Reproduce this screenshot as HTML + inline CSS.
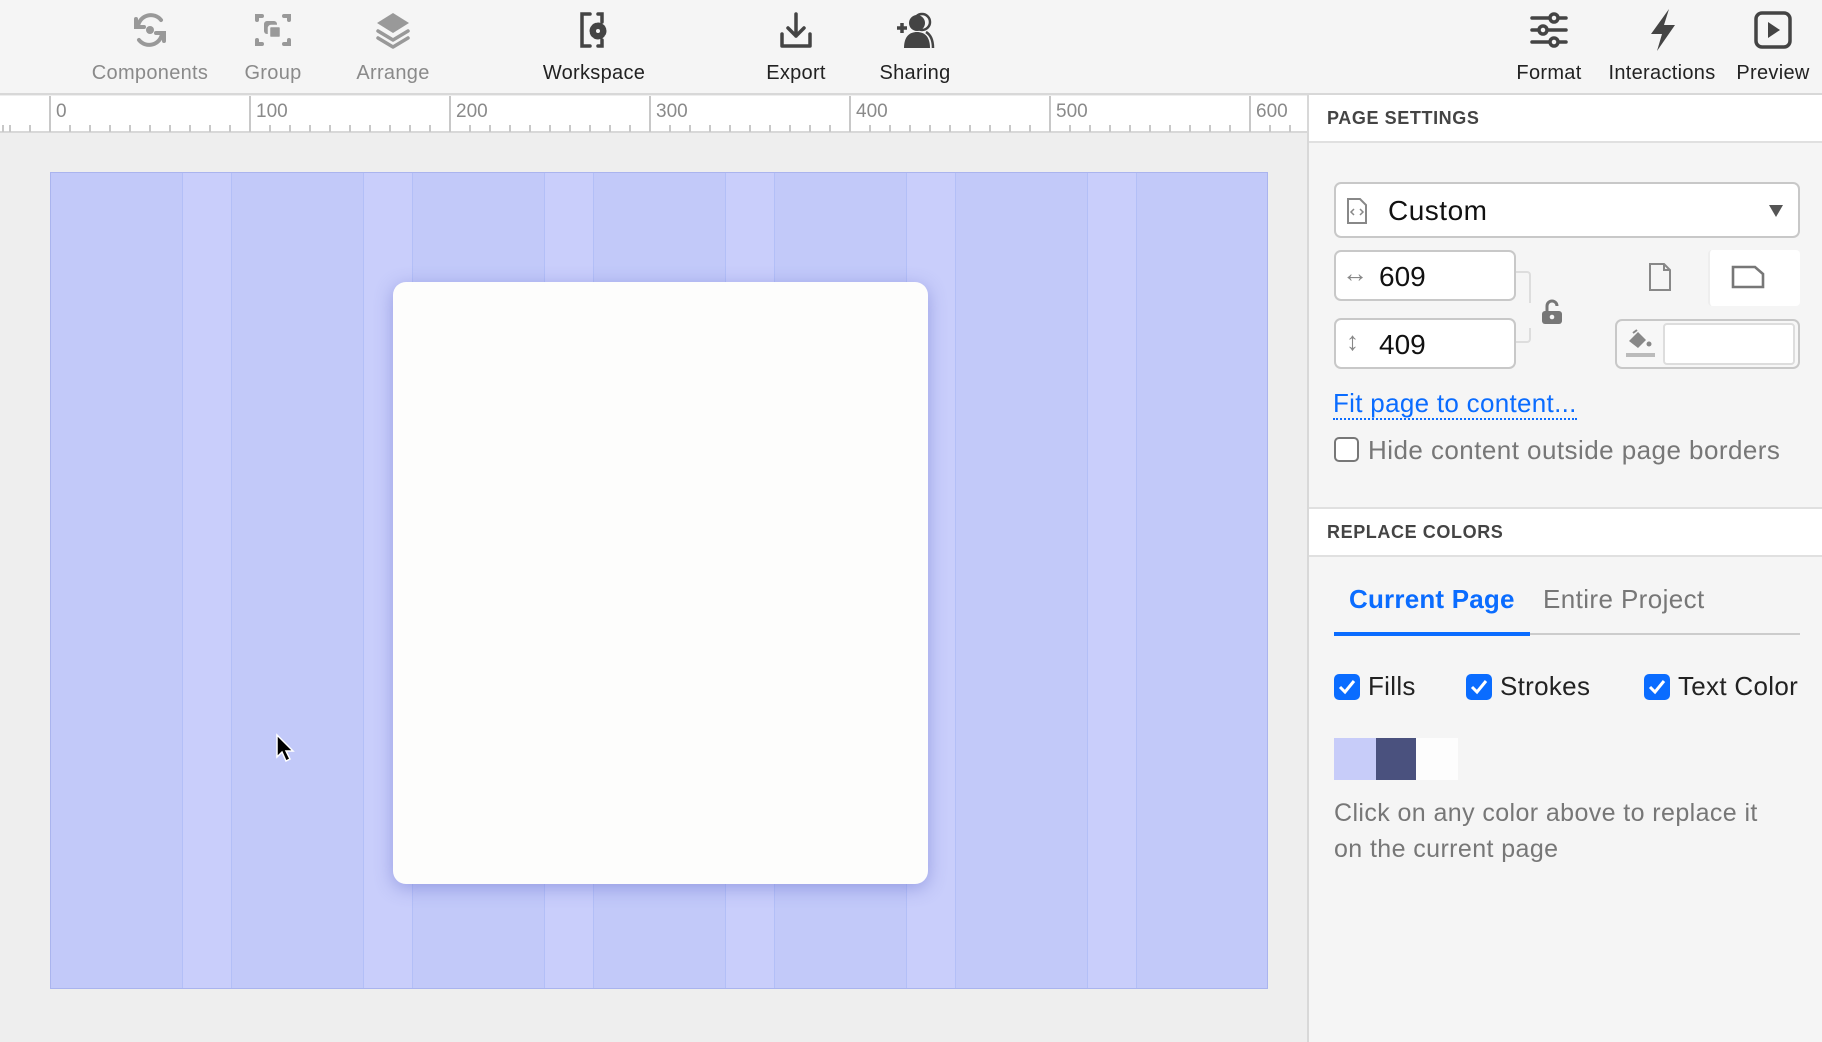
<!DOCTYPE html>
<html><head><meta charset="utf-8">
<style>
*{box-sizing:border-box;margin:0;padding:0}
body{width:1822px;height:1042px;overflow:hidden;background:#eeeeee;font-family:"Liberation Sans",Arial,sans-serif;position:relative}
.abs{position:absolute}
#top{left:0;top:0;width:1822px;height:95px;background:#f5f5f5;border-bottom:2px solid #d8d8d8}
.tb{position:absolute;top:8px;width:140px;margin-left:-70px;text-align:center;font-size:20px;color:#222;letter-spacing:.3px}
.tb svg{display:block;margin:0 auto 10px;width:44px;height:44px}
.tb.g{color:#8a8a8a}
#ruler{left:0;top:96px;width:1307px;height:37px;background:#fff;border-bottom:2px solid #d8d8d8;
background-image:repeating-linear-gradient(90deg,#c8c8c8 0 2px,transparent 2px 200px);background-position:49px 0}
#minor{left:0;top:125px;width:1307px;height:7px;background-image:repeating-linear-gradient(90deg,#c8c8c8 0 2px,transparent 2px 20px);background-position:9px 0}
.rl{position:absolute;top:101px;font-size:19px;color:#8a8a8a}
#grid{left:50px;top:172px;width:1218px;height:817px;border:1px solid #aab4ee;background:#c9cefb;overflow:hidden}
.col{position:absolute;top:0;height:100%;width:133px;background:#c2c9f9;border-left:1px solid #b3bff7;border-right:1px solid #b3bff7}
#page{left:393px;top:282px;width:535px;height:602px;background:#fdfdfc;border-radius:13px;box-shadow:0 4px 18px rgba(90,100,200,.45)}
#panel{left:1307px;top:95px;width:515px;height:947px;background:#f5f5f5;border-left:2px solid #d8d8d8}
.hdr{position:absolute;left:0;width:515px;height:48px;background:#fff;border-bottom:2px solid #e0e0e0;font-size:18px;font-weight:bold;color:#444;padding:13px 0 0 18px;letter-spacing:.6px}
.inp{position:absolute;background:#fff;border:2px solid #c8c8c8;border-radius:7px}
.cb{position:absolute;width:26px;height:26px;border-radius:5px;background:#0a6cff}
.cb svg{position:absolute;left:3px;top:3px}
.lbl{position:absolute;font-size:26px;color:#222;letter-spacing:.3px}
</style></head><body>
<div id="top" class="abs">
 <div class="tb g" style="left:150px"><svg viewBox="0 0 44 44" fill="none" stroke="#999" stroke-width="4" stroke-linecap="round"><path d="M10 18a13 13 0 0 1 23-6"/><path d="M34 26a13 13 0 0 1-23 6"/><path d="M8 11v8h8M36 33v-8h-8"/><circle cx="22" cy="22" r="4" fill="#999" stroke="none"/></svg>Components</div>
 <div class="tb g" style="left:273px"><svg viewBox="0 0 44 44" fill="none" stroke="#999" stroke-width="4" stroke-linecap="round"><path d="M6 12V8h5M33 8h5v4M38 32v4h-5M11 36H6v-4"/><rect x="13" y="13" width="13" height="13" rx="3" fill="#999" stroke="none"/><rect x="18" y="18" width="12" height="12" rx="2" fill="#999" stroke="#f5f5f5" stroke-width="2.5"/></svg>Group</div>
 <div class="tb g" style="left:393px"><svg viewBox="0 0 44 44"><path d="M22 5l16 10-16 10-16-10z" fill="#999"/><path d="M7 23l15 9 15-9M7 30l15 9 15-9" fill="none" stroke="#999" stroke-width="3.5" stroke-linecap="round" stroke-linejoin="round"/></svg>Arrange</div>
 <div class="tb" style="left:594px"><svg viewBox="0 0 44 44" fill="none" stroke="#444" stroke-width="3.5" stroke-linecap="round"><path d="M18 6H10v32h8M26 6h4v8M30 32v6h-4"/><circle cx="26" cy="23" r="5" fill="#444" stroke="none"/><circle cx="26" cy="23" r="6.5" stroke-dasharray="3 2.1" stroke-width="4"/><circle cx="26" cy="23" r="2" fill="#f5f5f5" stroke="none"/></svg>Workspace</div>
 <div class="tb" style="left:796px"><svg viewBox="0 0 44 44" fill="none" stroke="#444" stroke-width="3.5" stroke-linecap="round" stroke-linejoin="round"><path d="M22 6v22M14 20l8 8 8-8M8 26v12h28V26"/></svg>Export</div>
 <div class="tb" style="left:915px"><svg viewBox="0 0 44 44"><path d="M4 20h10M9 15v10" stroke="#444" stroke-width="3.5"/><circle cx="29" cy="14" r="8" fill="none" stroke="#444" stroke-width="2.5"/><circle cx="24" cy="15" r="8" fill="#444"/><path d="M11 40c0-12 6-16 13-16s13 4 13 16z" fill="#444"/><path d="M33 24c5 3 7 8 7 16" fill="none" stroke="#444" stroke-width="2.5"/></svg>Sharing</div>
 <div class="tb" style="left:1549px"><svg viewBox="0 0 44 44" fill="none" stroke="#444" stroke-width="3.5" stroke-linecap="round"><path d="M5 10h34M5 22h34M5 34h34"/><circle cx="27" cy="10" r="4" fill="#f5f5f5"/><circle cx="16" cy="22" r="4" fill="#f5f5f5"/><circle cx="27" cy="34" r="4" fill="#f5f5f5"/></svg>Format</div>
 <div class="tb" style="left:1662px"><svg viewBox="0 0 44 44"><path d="M29 1L11 26h11l-5 17 18-26H24z" fill="#444"/></svg>Interactions</div>
 <div class="tb" style="left:1773px"><svg viewBox="0 0 44 44"><rect x="5" y="5" width="34" height="34" rx="6" fill="none" stroke="#444" stroke-width="3.5"/><path d="M17 14l12 8-12 8z" fill="#444"/></svg>Preview</div>
</div>
<div id="ruler" class="abs"></div>
<div id="minor" class="abs"></div>
<div class="rl" style="left:56px">0</div><div class="rl" style="left:256px">100</div><div class="rl" style="left:456px">200</div><div class="rl" style="left:656px">300</div><div class="rl" style="left:856px">400</div><div class="rl" style="left:1056px">500</div><div class="rl" style="left:1256px">600</div>
<div id="grid" class="abs">
 <div class="col" style="left:-1px"></div><div class="col" style="left:180px"></div><div class="col" style="left:361px"></div><div class="col" style="left:542px"></div><div class="col" style="left:723px"></div><div class="col" style="left:904px"></div><div class="col" style="left:1085px"></div>
</div>
<div id="page" class="abs"></div>
<svg class="abs" style="left:274px;top:733px" width="22" height="30" viewBox="0 0 22 30"><path d="M3 2v22l5-5 4 9 4-2-4-8h7z" fill="#000" stroke="#fff" stroke-width="1.5"/></svg>
<div id="panel" class="abs">
 <div class="hdr" style="top:0">PAGE SETTINGS</div>
 <div class="inp" style="left:25px;top:87px;width:466px;height:56px">
  <svg class="abs" style="left:10px;top:13px" width="22" height="28" viewBox="0 0 22 28" fill="none" stroke="#888" stroke-width="2"><path d="M2 2h12l6 6v18H2z"/><path d="M8 12l-3 3 3 3M14 12l3 3-3 3" stroke-width="1.5"/></svg>
  <div class="abs" style="left:52px;top:11px;font-size:28px;color:#111;letter-spacing:.5px">Custom</div>
  <svg class="abs" style="left:432px;top:20px" width="16" height="14"><path d="M1 1h14L8 13z" fill="#555"/></svg>
 </div>
 <div class="inp" style="left:25px;top:155px;width:182px;height:51px"><div class="abs" style="left:6px;top:6px;font-size:26px;color:#888">↔</div><div class="abs" style="left:43px;top:9px;font-size:28px;color:#111">609</div></div>
 <div class="inp" style="left:25px;top:223px;width:182px;height:51px"><div class="abs" style="left:10px;top:6px;font-size:26px;color:#888">↕</div><div class="abs" style="left:43px;top:9px;font-size:28px;color:#111">409</div></div>
 <div class="abs" style="left:207px;top:176px;width:15px;height:32px;border:2px solid #ddd;border-left:none;border-bottom:none;border-radius:0 4px 0 0"></div>
 <div class="abs" style="left:207px;top:233px;width:15px;height:15px;border:2px solid #ddd;border-left:none;border-top:none;border-radius:0 0 4px 0"></div>
 <svg class="abs" style="left:232px;top:204px" width="22" height="26" viewBox="0 0 22 26"><path d="M6 12V7a5 5 0 0 1 10 0" fill="none" stroke="#777" stroke-width="3"/><rect x="1" y="12" width="20" height="13" rx="3" fill="#777"/><circle cx="11" cy="18" r="2.3" fill="#f5f5f5"/></svg>
 <svg class="abs" style="left:339px;top:167px" width="24" height="30" viewBox="0 0 24 30" fill="none" stroke="#888" stroke-width="2"><path d="M2 2h14l6 6v20H2z"/><path d="M16 2v6h6"/></svg>
 <div class="abs" style="left:399px;top:155px;width:92px;height:56px;background:#fff;border-left:2px solid #eee;border-radius:4px"></div>
 <svg class="abs" style="left:422px;top:169px" width="34" height="26" viewBox="0 0 34 26" fill="none" stroke="#777" stroke-width="2.6"><path d="M2 3h22l8 7v13H2z"/></svg>
 <div class="inp" style="left:306px;top:224px;width:185px;height:50px;background:#f7f7f7"><div class="abs" style="left:46px;top:2px;width:132px;height:42px;background:#fff;border:2px solid #ddd;border-radius:4px"></div>
 <svg class="abs" style="left:8px;top:8px" width="32" height="30" viewBox="0 0 32 30"><path d="M4 12l9-9 8 8-8 8z" fill="#888"/><path d="M8 4l4-3" stroke="#888" stroke-width="2"/><circle cx="24" cy="15" r="2.5" fill="#888"/><rect x="1" y="24" width="29" height="4" fill="#bbb"/></svg></div>
 <div class="abs" style="left:24px;top:293px;font-size:26px;color:#0a6cff;border-bottom:2px dotted #0a6cff;line-height:30px;letter-spacing:.3px">Fit page to content...</div>
 <div class="abs" style="left:25px;top:342px;width:25px;height:25px;border:2px solid #777;border-radius:5px;background:#fff"></div>
 <div class="abs" style="left:59px;top:340px;font-size:26px;color:#777;letter-spacing:.45px">Hide content outside page borders</div>
 <div class="hdr" style="top:412px;border-top:2px solid #e0e0e0;height:50px">REPLACE COLORS</div>
 <div class="abs" style="left:40px;top:489px;font-size:26px;font-weight:bold;color:#0a6cff;letter-spacing:.2px">Current Page</div>
 <div class="abs" style="left:234px;top:489px;font-size:26px;color:#777;letter-spacing:.4px">Entire Project</div>
 <div class="abs" style="left:25px;top:538px;width:466px;height:2px;background:#ccc"></div>
 <div class="abs" style="left:25px;top:537px;width:196px;height:4px;background:#0a6cff"></div>
 <div class="cb" style="left:25px;top:579px"><svg width="20" height="20"><path d="M3 10l5 5 9-11" stroke="#fff" stroke-width="3" fill="none"/></svg></div>
 <div class="lbl" style="left:59px;top:576px">Fills</div>
 <div class="cb" style="left:157px;top:579px"><svg width="20" height="20"><path d="M3 10l5 5 9-11" stroke="#fff" stroke-width="3" fill="none"/></svg></div>
 <div class="lbl" style="left:191px;top:576px">Strokes</div>
 <div class="cb" style="left:335px;top:579px"><svg width="20" height="20"><path d="M3 10l5 5 9-11" stroke="#fff" stroke-width="3" fill="none"/></svg></div>
 <div class="lbl" style="left:369px;top:576px">Text Color</div>
 <div class="abs" style="left:25px;top:643px;width:42px;height:42px;background:#c7ccf9"></div>
 <div class="abs" style="left:67px;top:643px;width:40px;height:42px;background:#4a517e"></div>
 <div class="abs" style="left:107px;top:643px;width:42px;height:42px;background:#fdfdfd"></div>
 <div class="abs" style="left:25px;top:700px;width:450px;font-size:25px;line-height:36px;color:#777;letter-spacing:.4px">Click on any color above to replace it on the current page</div>
</div>
</body></html>
